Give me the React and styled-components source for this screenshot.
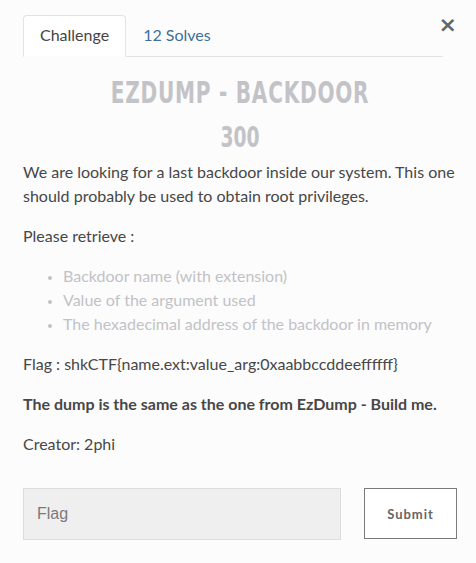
import React from "react";
import styled, { createGlobalStyle } from "styled-components";

const Global = createGlobalStyle`
  html, body { margin: 0; padding: 0; background: #fcfcfd; }
  body { font-family: Lato, "Noto Sans", sans-serif; color: #474747; }
  * { box-sizing: border-box; }
`;

const Modal = styled.div`
  width: 476px;
  height: 563px;
  padding: 15px 19px 0 23px;
  position: relative;
`;

const Close = styled.button`
  position: absolute;
  top: 14px;
  right: 19px;
  border: 0;
  background: none;
  padding: 0;
  font-family: "DejaVu Sans", sans-serif;
  font-size: 22px;
  font-weight: bold;
  color: #666;
  line-height: 1;
  cursor: pointer;
`;

const Tabs = styled.div`
  display: flex;
  width: 420px;
  border-bottom: 1px solid #e3e3e6;
`;

const Tab = styled.div`
  height: 42px;
  padding: 0 16px 3px;
  margin-bottom: -1px;
  display: flex;
  align-items: center;
  font-size: 16px;
  border: 1px solid ${(p) => (p.$active ? "#e3e3e6" : "transparent")};
  border-bottom-color: ${(p) => (p.$active ? "#fcfcfd" : "transparent")};
  border-radius: 4px 4px 0 0;
  background: ${(p) => (p.$active ? "#fff" : "transparent")};
  color: ${(p) => (p.$active ? "#444" : "#3f6f9c")};
`;

const Heading = styled.div`
  text-align: center;
  font-family: "DejaVu Sans Condensed", "DejaVu Sans", sans-serif;
  font-weight: bold;
  color: #c3c3c7;
  transform: scaleX(0.745);
`;

const Title = styled(Heading)`
  margin-top: 20px;
  font-size: 30px;
  line-height: 32px;
  letter-spacing: 1px;
`;

const Points = styled(Heading)`
  margin-top: 15px;
  font-size: 28px;
  line-height: 28px;
`;

const Body = styled.div`
  margin-top: 8px;
  width: 434px;
  font-size: 16px;
  line-height: 24px;
`;

const P = styled.p`
  margin: 0 0 16px;
  font-weight: ${(p) => (p.$bold ? 700 : 400)};
`;

const List = styled.ul`
  margin: 0 0 16px;
  padding-left: 40px;
  color: #c2c2c6;
  li::marker { font-size: 12px; }
`;

const Form = styled.div`
  margin-top: 32px;
  display: flex;
  gap: 23px;
  width: 434px;
`;

const Input = styled.input`
  flex: 0 0 318px;
  height: 52px;
  border: 1px solid #dcdcdf;
  background: #efeff0;
  padding: 0 13px;
  font-family: "Liberation Sans", Arial, sans-serif;
  font-size: 16px;
  color: #555;
  outline: none;
  &::placeholder { color: #7a7a7a; }
`;

const Submit = styled.button`
  flex: 0 0 93px;
  height: 51px;
  border: 1px solid #7a7a7a;
  background: #fff;
  font-family: Lato, sans-serif;
  font-weight: 700;
  font-size: 13px;
  letter-spacing: 1px;
  color: #666;
`;

export default function App() {
  return (
    <>
      <Global />
      <Modal>
        <Close aria-label="close">×</Close>
        <Tabs>
          <Tab $active>Challenge</Tab>
          <Tab>12 Solves</Tab>
        </Tabs>
        <Title>EZDUMP - BACKDOOR</Title>
        <Points>300</Points>
        <Body>
          <P>
            We are looking for a last backdoor inside our system. This one should
            probably be used to obtain root privileges.
          </P>
          <P>Please retrieve :</P>
          <List>
            <li>Backdoor name (with extension)</li>
            <li>Value of the argument used</li>
            <li>The hexadecimal address of the backdoor in memory</li>
          </List>
          <P>Flag : shkCTF{"{"}name.ext:value_arg:0xaabbccddeeffffff{"}"}</P>
          <P $bold>The dump is the same as the one from EzDump - Build me.</P>
          <P>Creator: 2phi</P>
        </Body>
        <Form>
          <Input placeholder="Flag" />
          <Submit>Submit</Submit>
        </Form>
      </Modal>
    </>
  );
}
